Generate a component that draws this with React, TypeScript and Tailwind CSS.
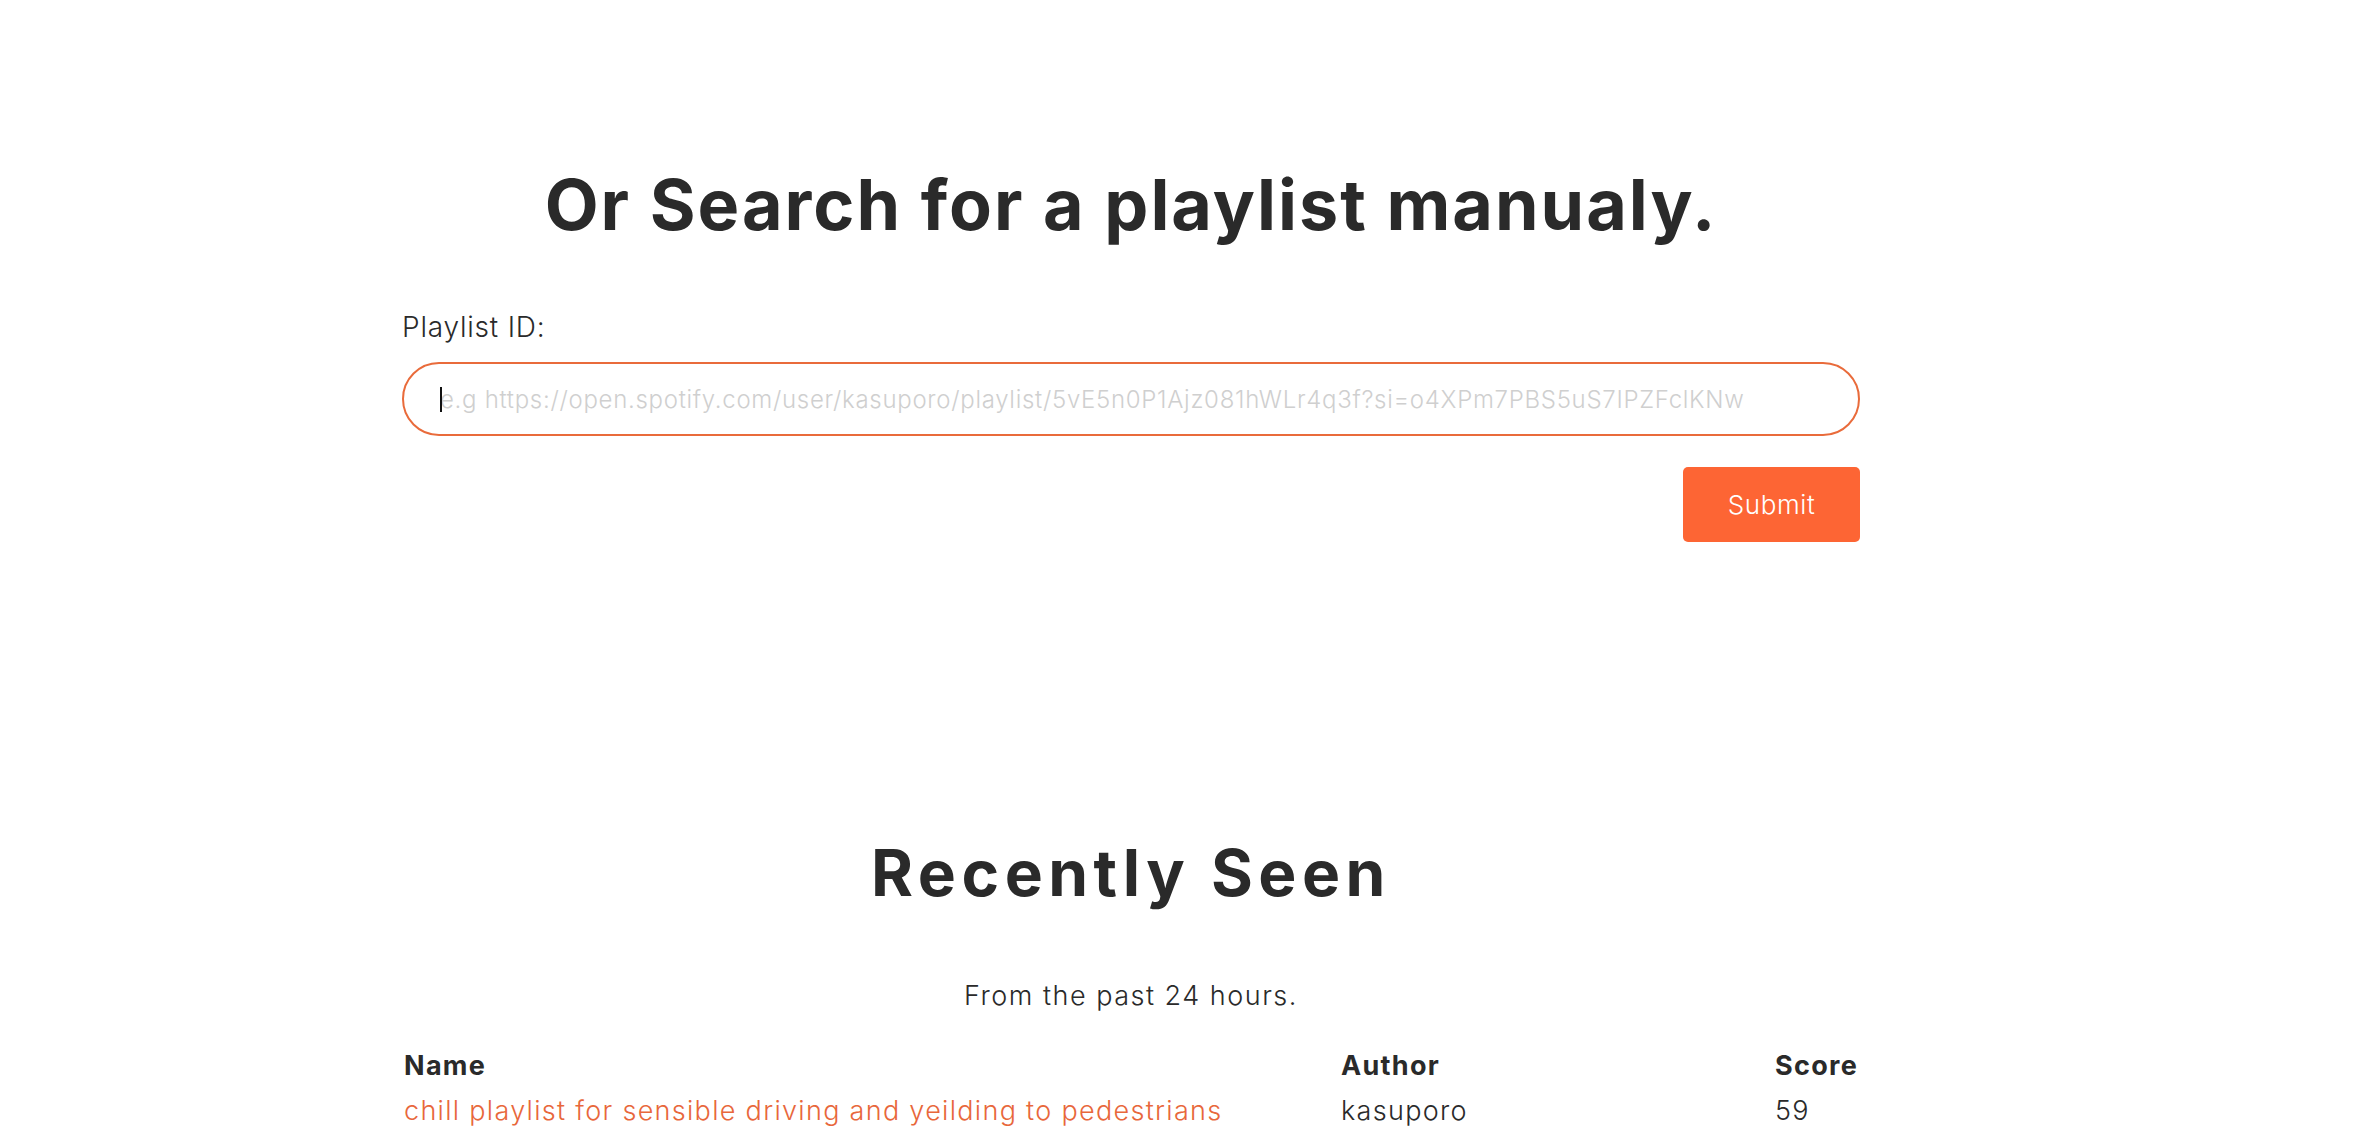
import React from "react";

export default function App() {
  return (
    <div
      className="min-h-screen w-full bg-white text-[#2a2a2a]"
      style={{ fontFamily: "Inter, 'Noto Sans', sans-serif" }}
    >
      <div className="ml-[402px] w-[1458px] pt-[170px]">
        <h1 className="text-center text-[70px] font-bold leading-none tracking-[2px]">
          Or Search for a playlist manualy.
        </h1>
        <label className="mt-[73px] block text-[28px] font-light leading-none tracking-[0.8px]">
          Playlist ID:
        </label>
        <div className="relative mt-[21px]">
          <input
            className="h-[74px] w-full rounded-full border-2 border-[#e96b3b] bg-white pl-[36px] text-[24px] font-light tracking-[0.7px] outline-none placeholder:text-[#cfcfcf]"
            placeholder="e.g https://open.spotify.com/user/kasuporo/playlist/5vE5n0P1Ajz081hWLr4q3f?si=o4XPm7PBS5uS7IPZFclKNw"
          />
          <span className="absolute left-[38px] top-[25px] h-[25px] w-[2px] bg-[#111]" />
        </div>
        <div className="mt-[31px] flex justify-end">
          <button className="h-[75px] w-[177px] rounded-[5px] bg-[#fd6534] text-[26px] font-light tracking-[0.6px] text-white">
            Submit
          </button>
        </div>
        <h2 className="mt-[299px] text-center text-[64px] font-bold leading-none tracking-[5.5px]">
          Recently Seen
        </h2>
        <p className="mt-[77px] text-center text-[27px] font-light leading-none tracking-[1.5px]">
          From the past 24 hours.
        </p>
        <div className="mt-[43px] grid grid-cols-[939px_434px_1fr] text-[27px] leading-none tracking-[1.3px]">
          <div className="pl-[2px] font-bold">Name</div>
          <div className="font-bold">Author</div>
          <div className="font-bold">Score</div>
          <div className="mt-[18px] pl-[2px] font-light text-[#e8673b]">
            chill playlist for sensible driving and yeilding to pedestrians
          </div>
          <div className="mt-[18px] font-light">kasuporo</div>
          <div className="mt-[18px] font-light">59</div>
        </div>
      </div>
    </div>
  );
}
